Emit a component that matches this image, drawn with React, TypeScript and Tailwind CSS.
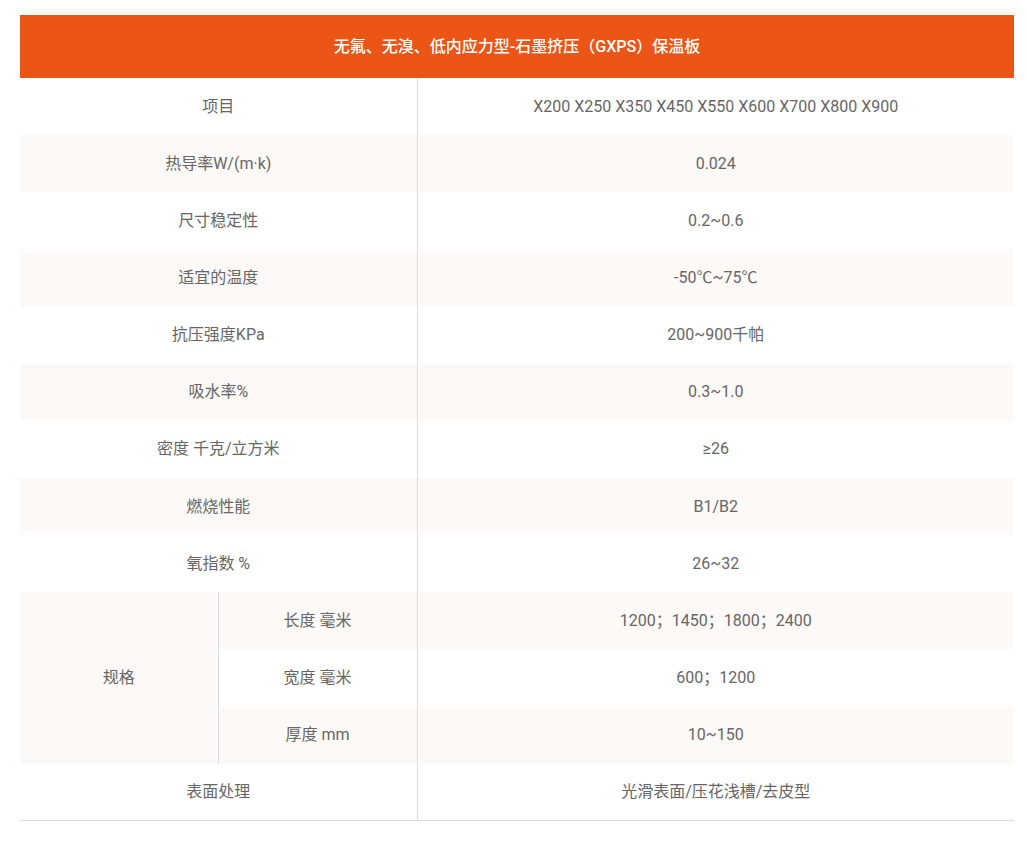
const rows: { label: string; value: string }[] = [
  { label: '项目', value: 'X200 X250 X350 X450 X550 X600 X700 X800 X900' },
  { label: '热导率W/(m·k)', value: '0.024' },
  { label: '尺寸稳定性', value: '0.2~0.6' },
  { label: '适宜的温度', value: '-50℃~75℃' },
  { label: '抗压强度KPa', value: '200~900千帕' },
  { label: '吸水率%', value: '0.3~1.0' },
  { label: '密度 千克/立方米', value: '≥26' },
  { label: '燃烧性能', value: 'B1/B2' },
  { label: '氧指数 %', value: '26~32' },
];

const specs = [
  { label: '长度 毫米', value: '1200；1450；1800；2400' },
  { label: '宽度 毫米', value: '600；1200' },
  { label: '厚度 mm', value: '10~150' },
];

const tint = 'bg-[#fcf9f7]';

export default function App() {
  return (
    <div
      className="min-h-[850px] bg-white pl-5 pr-[13px] pt-[15px] text-[16px] text-[#666]"
      style={{ fontFamily: 'Roboto, "Noto Sans CJK SC", sans-serif' }}
    >
      <table className="w-full border-collapse text-center">
        <thead>
          <tr>
            <th colSpan={3} className="h-[63px] bg-[#eb5516] text-[16px] font-medium text-white">
              无氟、无溴、低内应力型-石墨挤压（GXPS）保温板
            </th>
          </tr>
        </thead>
        <tbody>
          {rows.map((r, i) => (
            <tr key={r.label} className={`h-[57.15px] ${i % 2 === 1 ? tint : ''}`}>
              <td colSpan={2} className="w-[397px] border-r border-[#ddd] p-0">
                {r.label}
              </td>
              <td className="p-0">{r.value}</td>
            </tr>
          ))}
          {specs.map((s, i) => (
            <tr key={s.label} className={`h-[57.15px] ${i % 2 === 0 ? tint : ''}`}>
              {i === 0 && (
                <td rowSpan={3} className={`w-[198px] border-r border-[#ddd] p-0 ${tint}`}>
                  规格
                </td>
              )}
              <td className="w-[199px] border-r border-[#ddd] p-0">{s.label}</td>
              <td className="p-0">{s.value}</td>
            </tr>
          ))}
          <tr className="h-[57px] border-b border-[#ddd]">
            <td colSpan={2} className="border-r border-[#ddd] p-0">
              表面处理
            </td>
            <td className="p-0">光滑表面/压花浅槽/去皮型</td>
          </tr>
        </tbody>
      </table>
    </div>
  );
}
